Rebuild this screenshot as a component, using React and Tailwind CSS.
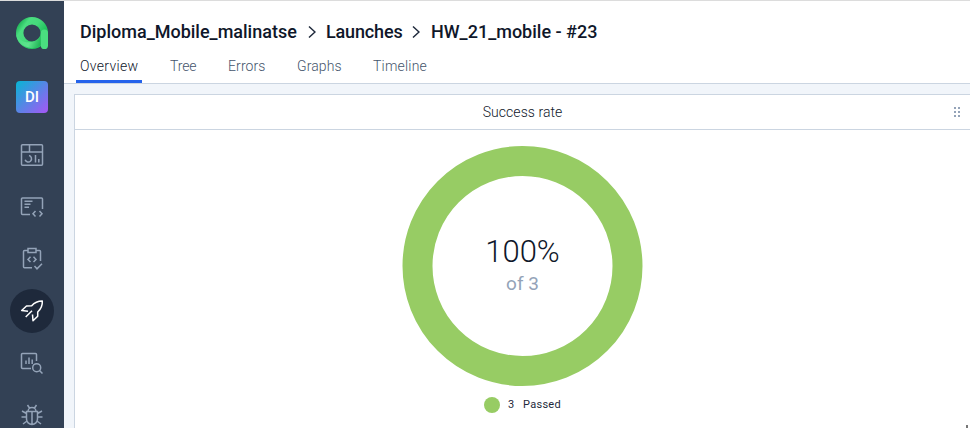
const Icon = ({ children }) => (
  <svg width="24" height="24" viewBox="0 0 24 24" fill="none" stroke="currentColor" strokeWidth="1.5">
    {children}
  </svg>
);

const Logo = () => (
  <svg width="32" height="32" viewBox="0 0 32 32" fill="none" className="shrink-0">
    <defs>
      <linearGradient id="ring" x1="3" y1="6" x2="28" y2="24" gradientUnits="userSpaceOnUse">
        <stop offset="0" stopColor="#1fb457" />
        <stop offset="0.2" stopColor="#4ade80" />
        <stop offset="0.5" stopColor="#45d97b" />
        <stop offset="0.8" stopColor="#22c55e" />
        <stop offset="1" stopColor="#22c55e" />
      </linearGradient>
      <linearGradient id="sweep" x1="1" y1="20" x2="24" y2="28" gradientUnits="userSpaceOnUse">
        <stop offset="0" stopColor="#4ade80" />
        <stop offset="0.55" stopColor="#5fe38e" />
        <stop offset="1" stopColor="#1fb455" />
      </linearGradient>
    </defs>
    <circle cx="16" cy="16" r="12.3" stroke="url(#ring)" strokeWidth="7.4" />
    <path d="M0 16c1.500 6 6.500 9.500 13 9.300 5-.2 9-2.500 11.500-6.300l.5 9.200A16 16 0 0 1 0 16Z" fill="url(#sweep)" />
    <path d="M24.800 16a3.600 3.600 0 0 1 7.200 0v12.400a3.600 3.600 0 0 1-7.200 0Z" fill="#4ade80" />
  </svg>
);

const sideIcons = [
  <Icon key="dash">
    <path d="M2.500 1.700h19a1 1 0 0 1 1 1v18.600a1 1 0 0 1-1 1h-19a1 1 0 0 1-1-1V2.700a1 1 0 0 1 1-1ZM1.500 9h21M9.500 1.700V9" />
    <path d="M9 12.500a3.300 3.300 0 1 1-3.900 4.300M15.500 12v7.500M18.800 16v3.500" />
  </Icon>,
  <Icon key="cases">
    <path d="M10 19.500H2.500a1 1 0 0 1-1-1V4a1 1 0 0 1 1-1h19a1 1 0 0 1 1 1v10M4.500 6.300h8M4.500 9.300h6M4.500 12.300h4.500M15.500 16 13 18.800l2.500 2.700M19.500 16l2.500 2.800-2.500 2.700" />
  </Icon>,
  <Icon key="plan">
    <path d="M8 3.500H4.500a1 1 0 0 0-1 1v15.300a1 1 0 0 0 1 1H12M16 3.500h3.500a1 1 0 0 1 1 1V14M8 1.500h8v4H8ZM10.500 9.800 8 12.500l2.500 2.500M13.500 9.800l2.500 2.700-2.500 2.500M14.500 19l2.500 2.800 5-5" />
  </Icon>,
  <Icon key="launch">
    <path strokeLinejoin="round" d="M8 12.200 1.700 11.500 6.500 7l5.200-.2C14.500 3.500 17.500 2 22.300 2c.3 4.500-1 7.600-4.600 11v4.200L13 21.800l-.5-6.300M5.700 18l6.300-6.300" />
  </Icon>,
  <Icon key="report">
    <path d="M11 17.500H2.500a1 1 0 0 1-1-1v-13a1 1 0 0 1 1-1h13a1 1 0 0 1 1 1v6.500M6 9.500v3.500M9 6.500V13M12.200 8.500V13" />
    <circle cx="16.700" cy="16.700" r="4" />
    <path d="m19.500 19.500 3 3" />
  </Icon>,
  <Icon key="bug">
    <path d="M6.500 8.500h11V16a5.500 5.500 0 0 1-11 0ZM8 8.500a4 4 0 0 1 8 0M12 8.500v13M9.500 5 7.500 2M14.500 5l2-3M6.500 10.500 2 8M17.500 10.500l4.500-2.500M6.500 14h-5M17.500 14h5M7 18l-4 3M17 18l4 3" />
  </Icon>,
];

const Chevron = () => (
  <svg width="8" height="14" viewBox="0 0 8 14" fill="none" stroke="#1e293b" strokeWidth="1.500">
    <path d="m1 1.500 6 5.500-6 5.500" />
  </svg>
);

const tabs = [
  { label: "Overview", box: "w-[66px] text-slate-900 tracking-[0.3px]", on: true },
  { label: "Tree", box: "w-[34px] text-slate-600 tracking-[-0.1px]" },
  { label: "Errors", box: "w-[45px] text-slate-600 tracking-[0.1px]" },
  { label: "Graphs", box: "w-[52px] text-slate-600 tracking-[0.1px]" },
  { label: "Timeline", box: "w-[62px] text-slate-600 tracking-[0.2px]" },
];

export default function App() {
  return (
    <div className="flex h-[428px] w-[970px] overflow-hidden border-t border-[#dcdcdc] bg-[#f1f5fa] font-['Roboto','Liberation_Sans',sans-serif]">
      <aside className="flex w-16 shrink-0 flex-col items-center bg-[#334155] pt-4">
        <Logo />
        <div className="mt-8 flex size-8 shrink-0 items-center justify-center rounded bg-linear-to-br/srgb from-[#06b6d4] to-[#a855f7] pt-px text-[15px] font-medium text-white">DI</div>
        <nav className="mt-5 flex flex-col gap-2">
          {sideIcons.map((icon, i) => (
            <div key={i} className={i === 3 ? "flex size-11 shrink-0 items-center justify-center rounded-full bg-[#1e293b] text-white" : "flex size-11 shrink-0 items-center justify-center text-[#94a3b8]"}>
              {icon}
            </div>
          ))}
        </nav>
      </aside>
      <main className="flex min-w-0 flex-1 flex-col">
        <header className="h-[83px] shrink-0 border-b border-[#cbd5e1] bg-white">
          <div className="flex h-[52px] items-center pt-[9px] pl-4 text-[18px] font-medium whitespace-nowrap text-[#0f172a]">
            <span className="w-[228px]">Diploma_Mobile_malinatse</span>
            <Chevron />
            <span className="ml-[10px] w-[86px] tracking-[-0.15px]">Launches</span>
            <Chevron />
            <span className="ml-[11px]">HW_21_mobile - #23</span>
          </div>
          <div className="flex h-[30px] gap-6 pl-3">
            {tabs.map((t) => (
              <div key={t.label} className={`${t.box} h-[30px] px-1 pt-[3px] text-[14px] leading-5 font-light whitespace-nowrap ${t.on ? "border-b-3 border-[#2563eb]" : ""}`}>{t.label}</div>
            ))}
          </div>
        </header>
        <section className="mt-[10px] ml-[10px] flex flex-1 flex-col border-t border-l border-[#cbd5e1] bg-white">
          <div className="flex h-[35px] shrink-0 items-center border-b border-[#cbd5e1] text-[14px] text-[#0f172a]">
            <h2 className="flex-1 pl-[17px] text-center font-light tracking-[0.05px]">Success rate</h2>
            <svg width="17" height="12" viewBox="0 0 17 12" fill="#94a3b8">
              <path d="M1 1h2v2H1zM5 1h2v2H5zM1 5h2v2H1zM5 5h2v2H5zM1 9h2v2H1zM5 9h2v2H5z" />
            </svg>
          </div>
          <div className="flex flex-col items-center pt-4">
            <div className="grid h-[240px] w-[241px] place-items-center">
              <svg className="col-start-1 row-start-1" width="241" height="240" viewBox="0 0 241 240" fill="none">
                <circle cx="120.500" cy="120" r="105" stroke="#97cc64" strokeWidth="30" />
              </svg>
              <div className="col-start-1 row-start-1 flex flex-col items-center">
                <div className="text-[31px] leading-9 font-light text-[#0f172a]">100%</div>
                <div className="text-[19px] leading-7 font-normal text-[#94a3b8]">of 3</div>
              </div>
            </div>
            <div className="mt-[11px] flex h-4 items-center text-[11px] text-[#1e293b]">
              <span className="mr-2 size-4 rounded-full bg-[#97cc64]" />
              <span className="w-[15px] pt-px">3</span>
              <span className="pt-px tracking-[0.25px]">Passed</span>
            </div>
          </div>
        </section>
        <div className="absolute top-[425px] left-[966px] h-[3px] w-[2px] bg-[#777]" />
      </main>
    </div>
  );
}
